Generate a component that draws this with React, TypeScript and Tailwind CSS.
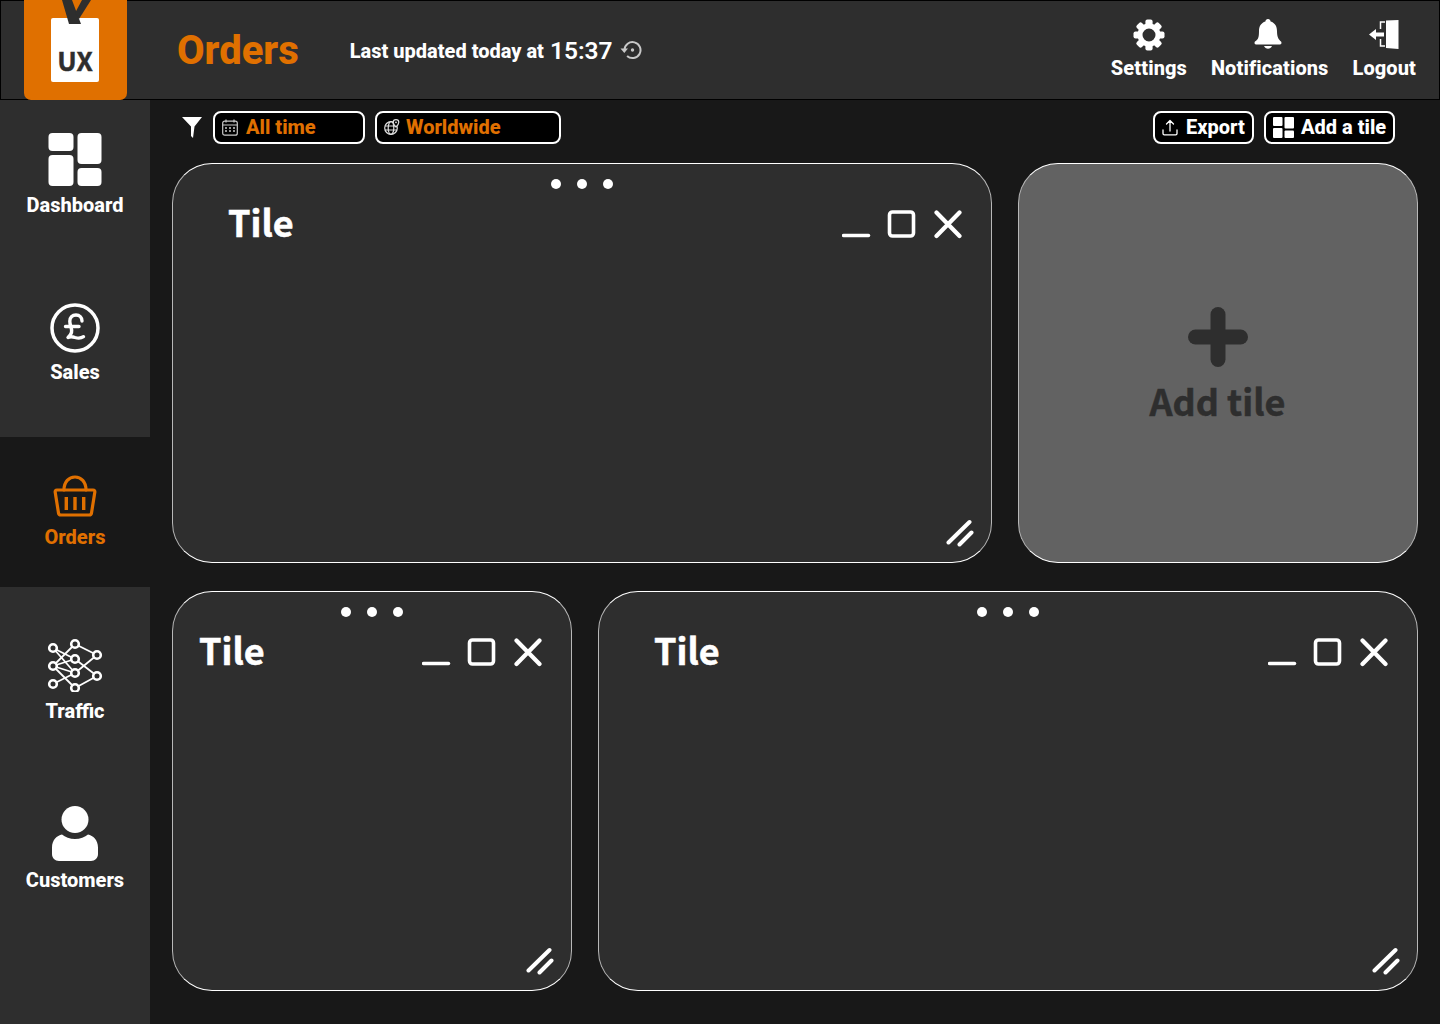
import React from "react";

const ORANGE = "text-[#e07000]";

function GearIcon() {
  const teeth = [0, 45, 90, 135, 180, 225, 270, 315];
  return (
    <svg width="32" height="32" viewBox="0 0 32 32" fill="#fff">
      {teeth.map((a) => (
        <rect key={a} x="12.4" y="0.500" width="7.2" height="8" rx="2" transform={`rotate(${a} 16 16)`} />
      ))}
      <path fillRule="evenodd" d="M16 4.500a11.500 11.500 0 1 0 0 23 11.500 11.500 0 0 0 0-23Zm0 5a6.500 6.500 0 1 1 0 13 6.500 6.500 0 0 1 0-13Z" />
    </svg>
  );
}

function BellIcon() {
  return (
    <svg width="30" height="32" viewBox="0 0 30 32" fill="#fff" className="-ml-[4px]">
      <path d="M15 0c1.500 0 2.500 1 2.600 2.500C22 3.800 24 7.500 24 12c0 6 1.600 8.500 4 10.500.8.700.6 3-1 3H3c-1.600 0-1.800-2.300-1-3C5.400 20.500 6 18 6 12c0-4.500 2-8.200 6.400-9.500C12.500 1 13.500 0 15 0Z" />
      <path d="M11 27h8c-.6 1.500-2.300 2.700-4 2.700s-3.400-1.200-4-2.700Z" />
    </svg>
  );
}

function LogoutIcon() {
  return (
    <svg width="32" height="32" viewBox="0 0 32 32" fill="none">
      <path d="M18 1.500 30.500 1v29l-12.500-1Z" fill="#fff" />
      <path d="M17 3H12.500v7M12.500 20v7H17" stroke="#fff" strokeWidth="1.500" />
      <path d="M1 15.500 8 10v3.500h8v4H8V21Z" fill="#fff" />
    </svg>
  );
}

function GridIcon({ size = 54 }: { size?: number }) {
  return (
    <svg width={size} height={size} viewBox="0 0 54 54" fill="#fff">
      <rect x="0.500" y="0" width="25" height="18" rx="4" />
      <rect x="29.500" y="0" width="24" height="31" rx="4" />
      <rect x="0.500" y="22" width="25" height="31" rx="4" />
      <rect x="29.500" y="35" width="24" height="18" rx="4" />
    </svg>
  );
}

function PoundIcon() {
  return (
    <svg width="50" height="50" viewBox="0 0 50 50" fill="none">
      <circle cx="25" cy="25" r="23" stroke="#fff" strokeWidth="3.500" />
      <path d="M32 18c0-3.500-2.500-6-6-6-3.800 0-6.200 2.700-6.200 6.200 0 4.800 2.700 7.300 1.700 11.300-.5 2-1.800 3.500-3.500 5 2.500-1.300 4.700-.8 7 0 2.500.8 5.500 1.300 8.500-.8M15.500 23.500H29" stroke="#fff" strokeWidth="3.400" strokeLinecap="round" strokeLinejoin="round" />
    </svg>
  );
}

function BasketIcon() {
  return (
    <svg width="44" height="44" viewBox="0 0 44 44" fill="none" stroke="#e07000" strokeWidth="3.200" strokeLinecap="round" strokeLinejoin="round">
      <path d="M11 15C11 6.500 16 2 22 2s11 4.500 11 13" />
      <path d="M4 15h36c1.500 0 2 1 1.800 2.300L38.500 38c-.2 1.300-1 2-2.300 2H7.800c-1.300 0-2.100-.7-2.300-2L2.200 17.300C2 16 2.500 15 4 15Z" />
      <path d="M13.300 22v13M22 22v13M30.700 22v13" strokeWidth="3.400" strokeLinecap="butt" />
    </svg>
  );
}

function NetworkIcon() {
  const nodes: [number, number][] = [
    [6, 10], [28, 6], [50, 17], [28, 21], [6, 28], [28, 35], [50, 38], [6, 46], [28, 50],
  ];
  const edges: [number, number, number, number][] = [
    [6, 10, 28, 21], [6, 10, 28, 35], [6, 28, 28, 6], [6, 28, 28, 21], [6, 28, 28, 35], [6, 28, 28, 50],
    [6, 46, 28, 35], [28, 6, 50, 17], [50, 17, 28, 35], [28, 21, 50, 38], [50, 38, 28, 50],
  ];
  return (
    <svg width="56" height="54" viewBox="0 0 56 54" fill="none">
      {edges.map((e, i) => (
        <line key={i} x1={e[0]} y1={e[1]} x2={e[2]} y2={e[3]} stroke="#fff" strokeWidth="1.800" />
      ))}
      {nodes.map((n, i) => (
        <circle key={i} cx={n[0]} cy={n[1]} r="3.800" fill="#2e2e2e" stroke="#fff" strokeWidth="2.600" />
      ))}
    </svg>
  );
}

function PersonIcon() {
  return (
    <svg width="46" height="55" viewBox="0 0 46 55" fill="#fff">
      <circle cx="23" cy="13.500" r="13.500" />
      <path d="M10 28.500c3 2.500 8 4.500 13 4.500s10-2 13-4.500c5 1 10 5.500 10 13V48c0 4-3 7-7 7H7c-4 0-7-3-7-7v-6.500c0-7.500 5-12 10-13Z" />
    </svg>
  );
}

function HistoryIcon() {
  return (
    <svg width="22" height="20" viewBox="0 0 22 20" fill="none" stroke="#c8c8c8" strokeWidth="2">
      <path d="M4.500 10a8 8 0 1 1 2.600 6" />
      <path d="M0.500 8.500h7.500L4.300 13Z" fill="#c8c8c8" stroke="none" />
      <circle cx="12.500" cy="10" r="1.700" fill="#c8c8c8" stroke="none" />
    </svg>
  );
}

function FunnelIcon() {
  return (
    <svg width="20" height="21" viewBox="0 0 20 21" fill="#fff">
      <path d="M0 0h20l-7.500 9.500L11 21 9 19V9.500Z" />
    </svg>
  );
}

function CalendarIcon() {
  return (
    <svg width="16" height="17" viewBox="0 0 16 17" fill="none" stroke="#c9c9c9" strokeWidth="1.200">
      <rect x="0.700" y="2.200" width="14.600" height="14" rx="2" />
      <path d="M.7 6h14.600M4 .5v3M12 .5v3" />
      <path d="M3 9h2M7 9h2M11 9h2M3 12h2M7 12h2M11 12h2" strokeWidth="1.500" />
    </svg>
  );
}

function GlobeIcon() {
  return (
    <svg width="16" height="16" viewBox="0 0 16 16" fill="none" stroke="#e0e0e0" strokeWidth="1.200">
      <circle cx="7" cy="9" r="6.300" />
      <ellipse cx="7" cy="9" rx="2.800" ry="6.300" />
      <path d="M.9 7h12M.9 11h12" />
      <path d="M12 .6c-1.800 0-2.800 1.300-2.800 2.700 0 1.500 1.800 3.700 2.800 4.700 1-1 2.800-3.200 2.800-4.700C14.800 1.900 13.800.6 12 .6Z" fill="#000" />
      <circle cx="12" cy="3.300" r=".9" fill="#e0e0e0" stroke="none" />
    </svg>
  );
}

function UploadIcon() {
  return (
    <svg width="16" height="17" viewBox="0 0 16 17" fill="none" stroke="#fff" strokeWidth="1.300" strokeLinecap="round" strokeLinejoin="round">
      <path d="M8 12V1.500M4.500 5 8 1.500 11.500 5M1 11v3.500c0 .8.500 1.300 1.300 1.300h11.400c.8 0 1.300-.5 1.300-1.300V11" />
    </svg>
  );
}

function SmallGrid() {
  return (
    <svg width="21" height="21" viewBox="0 0 21 21" fill="#fff">
      <rect x="0" y="0" width="9.500" height="9" rx="1" />
      <rect x="11.500" y="0" width="9.500" height="11.500" rx="1" />
      <rect x="0" y="11" width="9.500" height="10" rx="1" />
      <rect x="11.500" y="13.500" width="9.500" height="7.500" rx="1" />
    </svg>
  );
}

function TileControls() {
  return (
    <svg width="120" height="30" viewBox="0 0 120 30" fill="none" stroke="#fff" strokeLinecap="round" strokeLinejoin="round">
      <path d="M1.500 26.500h25" strokeWidth="3.500" />
      <rect x="47.500" y="3" width="24" height="24" rx="3" strokeWidth="3.600" />
      <path d="M94.500 3.500l23 23.500M117.500 3.500l-23 23.500" strokeWidth="4.200" />
    </svg>
  );
}

function ResizeIcon() {
  return (
    <svg width="28" height="28" viewBox="0 0 28 28" fill="none" stroke="#fff" strokeWidth="4" strokeLinecap="round">
      <path d="M2.500 23.500 23.500 3M13.500 25.500 25.500 13.500" />
    </svg>
  );
}

function Dots() {
  return (
    <div className="flex gap-4 absolute top-[15px] left-1/2 -translate-x-1/2 -ml-[0.5px]">
      <span className="w-2.5 h-2.5 rounded-full bg-white" />
      <span className="w-2.5 h-2.5 rounded-full bg-white" />
      <span className="w-2.5 h-2.5 rounded-full bg-white" />
    </div>
  );
}

function Tile({ width, titleLeft }: { width: string; titleLeft: string }) {
  return (
    <section className={`${width} h-[400px] relative rounded-[40px] border border-white border-x-[#b8b8b8] bg-[#2e2e2e]`}>
      <Dots />
      <div className={`flex items-start justify-between pt-[33px] pr-[29px] ${titleLeft}`}>
        <h2 className="text-[36px] leading-[48px] font-bold text-white [-webkit-text-stroke:0.5px_#ffffff]" style={{ fontFamily: '"Noto Sans CJK SC", sans-serif' }}>
          Tile
        </h2>
        <div className="pt-[12px]">
          <TileControls />
        </div>
      </div>
      <div className="absolute right-[17px] bottom-[15px]">
        <ResizeIcon />
      </div>
    </section>
  );
}

function SideItem({ icon, label, h, pt, active, gap }: { icon: React.ReactNode; label: string; h: string; pt: string; active?: boolean; gap: string }) {
  return (
    <div className={`${h} ${pt} ${gap} flex flex-col items-center ${active ? "bg-[#181818]" : ""}`}>
      {icon}
      <span className={`text-[20px] leading-[24px] font-extrabold ${active ? ORANGE : "text-white"}`}>{label}</span>
    </div>
  );
}

function HeadAction({ icon, label }: { icon: React.ReactNode; label: string }) {
  return (
    <div className="flex flex-col items-center gap-[5px]">
      <div className="h-[32px] flex items-center">{icon}</div>
      <span className="text-[20px] leading-[24px] font-extrabold tracking-[0.1px] text-white">{label}</span>
    </div>
  );
}

export default function App() {
  return (
    <div className="w-[1440px] h-[1024px] overflow-hidden bg-[#181818] flex flex-col" style={{ fontFamily: 'Roboto, sans-serif' }}>
      <header className="h-[100px] shrink-0 bg-[#2e2e2e] border border-black flex items-center relative">
        <div className="absolute left-[23px] -top-px w-[103px] h-[100px] bg-[#e07000] rounded-b-[7px] flex justify-center">
          <div className="absolute top-[18px] left-[27px] w-[48px] h-[64px] bg-white rounded-[2px] flex items-end justify-center pb-[2px]">
            <span className="text-[26px] leading-[40px] font-bold text-[#2e2e2e] [-webkit-text-stroke:0.5px_#2e2e2e]" style={{ fontFamily: '"Noto Sans CJK SC", sans-serif' }}>UX</span>
          </div>
          <svg className="absolute top-0 left-[33px]" width="36" height="26" viewBox="0 0 36 26" fill="none">
            <path d="M5 0h10l9 24H12Z" fill="#2e2e2e" />
            <path d="M25 0h9L22 19l-4-6Z" fill="#2e2e2e" />
          </svg>
        </div>
        <h1 className={`ml-[176px] mt-[2px] text-[40px] leading-[48px] font-extrabold ${ORANGE}`}>Orders</h1>
        <div className="ml-[51px] flex items-center text-white">
          <span className="text-[20px] leading-[24px] font-extrabold mt-[2px]">Last updated today at</span>
          <span className="text-[24.5px] leading-[28px] font-semibold ml-[6px] mt-[1px]">15:37</span>
          <span className="ml-[7px]"><HistoryIcon /></span>
        </div>
        <div className="ml-auto mr-[23px] flex items-start gap-[24px] -mt-[2px]">
          <HeadAction icon={<GearIcon />} label="Settings" />
          <HeadAction icon={<BellIcon />} label="Notifications" />
          <HeadAction icon={<LogoutIcon />} label="Logout" />
        </div>
      </header>

      <div className="flex flex-1 min-h-0">
        <aside className="w-[150px] shrink-0 bg-[#2e2e2e] flex flex-col">
          <SideItem h="h-[169px]" pt="pt-[33px]" gap="gap-[6px]" icon={<GridIcon />} label="Dashboard" />
          <SideItem h="h-[168px]" pt="pt-[34px]" gap="gap-[7px]" icon={<PoundIcon />} label="Sales" />
          <SideItem h="h-[150px]" pt="pt-[38px]" gap="gap-[6px]" active icon={<BasketIcon />} label="Orders" />
          <SideItem h="h-[169px]" pt="pt-[51px]" gap="gap-[7px]" icon={<NetworkIcon />} label="Traffic" />
          <SideItem h="h-[168px]" pt="pt-[50px]" gap="gap-[7px]" icon={<PersonIcon />} label="Customers" />
        </aside>

        <main className="flex-1 min-w-0 pl-[22px] pr-[22px]">
          <div className="h-[63px] flex items-center pb-[9px] pl-[10px] pr-[23px]">
            <FunnelIcon />
            <div className="ml-[11px] w-[152px] h-[33px] rounded-[8px] border-2 border-white bg-black flex items-center pl-[7px] gap-[8px]">
              <CalendarIcon />
              <span className={`text-[20px] leading-[24px] font-extrabold ${ORANGE}`}>All time</span>
            </div>
            <div className="ml-[10px] w-[186px] h-[33px] rounded-[8px] border-2 border-white bg-black flex items-center pl-[7px] gap-[6px]">
              <GlobeIcon />
              <span className={`text-[20px] leading-[24px] font-extrabold ${ORANGE}`}>Worldwide</span>
            </div>
            <div className="ml-auto w-[101px] h-[33px] rounded-[8px] border-2 border-white bg-black flex items-center pl-[7px] gap-[8px]">
              <UploadIcon />
              <span className="text-[20px] leading-[24px] font-extrabold text-white">Export</span>
            </div>
            <div className="ml-[10px] w-[131px] h-[33px] rounded-[8px] border-2 border-white bg-black flex items-center pl-[7px] gap-[7px]">
              <SmallGrid />
              <span className="text-[20px] leading-[24px] font-extrabold text-white">Add a tile</span>
            </div>
          </div>

          <div className="flex gap-[26px]">
            <Tile width="w-[820px]" titleLeft="pl-[55px]" />
            <section className="w-[400px] h-[400px] rounded-[40px] border border-white border-x-[#b8b8b8] bg-[#626262] flex flex-col items-center pt-[143px]">
              <svg width="60" height="60" viewBox="0 0 60 60" fill="#2e2e2e" className="-ml-[1px]">
                <rect x="22.500" y="0" width="15" height="60" rx="7.500" />
                <rect x="0" y="22.500" width="60" height="15" rx="7.500" />
              </svg>
              <span className="text-[36px] leading-[48px] mt-[9px] font-bold text-[#2e2e2e] -ml-[1px] [-webkit-text-stroke:0.5px_#2e2e2e]" style={{ fontFamily: '"Noto Sans CJK SC", sans-serif' }}>Add tile</span>
            </section>
          </div>
          <div className="flex gap-[26px] mt-[28px]">
            <Tile width="w-[400px]" titleLeft="pl-[26px]" />
            <Tile width="w-[820px]" titleLeft="pl-[55px]" />
          </div>
        </main>
      </div>
    </div>
  );
}
